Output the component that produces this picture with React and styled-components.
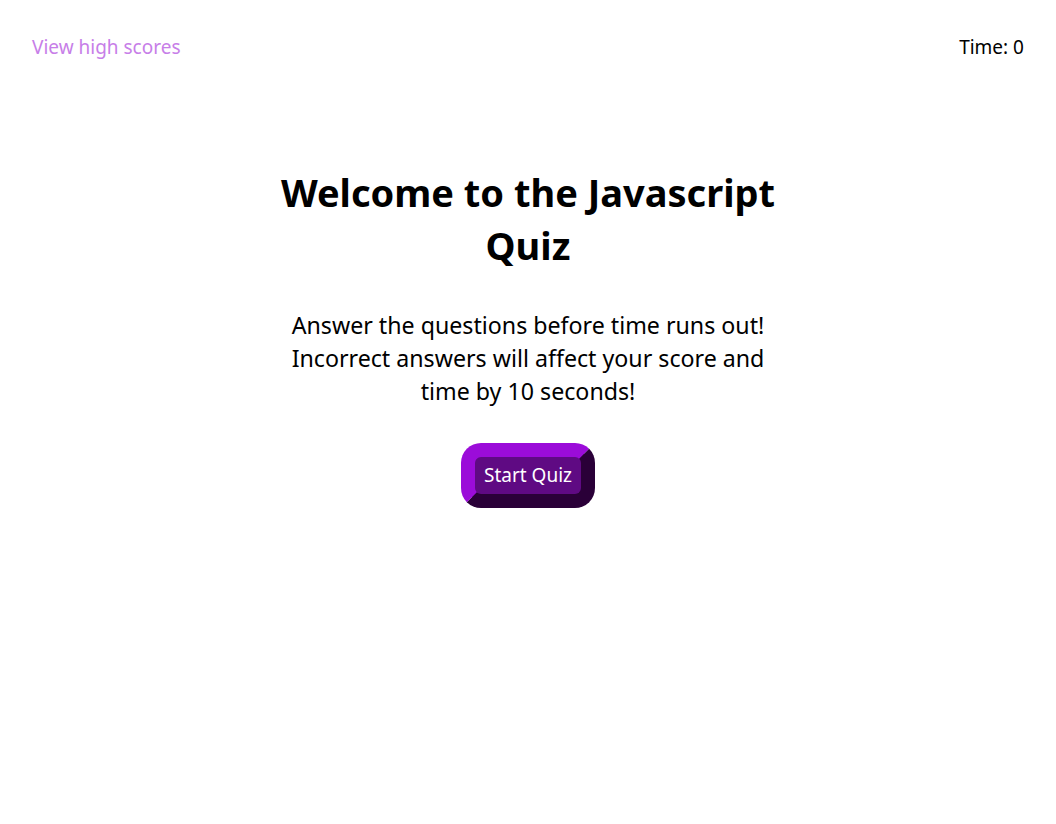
import React from "react";
import styled, { createGlobalStyle } from "styled-components";

const GlobalStyle = createGlobalStyle`
  body {
    margin: 0;
    background: #ffffff;
    font-family: "Segoe UI", "Noto Sans", "Open Sans", sans-serif;
    color: #000000;
  }
`;

const App = () => {
  return (
    <>
      <GlobalStyle />
      <Header>
        <HighScores href="#">View high scores</HighScores>
        <Timer>Time: 0</Timer>
      </Header>
      <Main>
        <Title>Welcome to the Javascript Quiz</Title>
        <Intro>
          Answer the questions before time runs out! Incorrect answers will
          affect your score and time by 10 seconds!
        </Intro>
        <StartButton>Start Quiz</StartButton>
      </Main>
    </>
  );
};

const Header = styled.header`
  display: flex;
  justify-content: space-between;
  align-items: center;
  padding: 34px 32px 0;
  font-size: 19px;
  line-height: 27px;
`;

const HighScores = styled.a`
  color: #c77ee8;
  text-decoration: none;
`;

const Timer = styled.div`
  color: #000000;
`;

const Main = styled.main`
  width: 500px;
  margin: 0 auto;
  display: flex;
  flex-direction: column;
  align-items: center;
  text-align: center;
`;

const Title = styled.h1`
  margin: 105px 0 0;
  font-size: 38px;
  line-height: 53px;
  font-weight: 700;
`;

const Intro = styled.p`
  margin: 37px 0 0;
  font-size: 23.2px;
  line-height: 33px;
`;

const StartButton = styled.button`
  margin-top: 35px;
  padding: 0 9px;
  height: 65px;
  border-width: 14px;
  border-style: solid;
  border-color: #9b0cd9 #2a0038 #2a0038 #9b0cd9;
  border-radius: 20px;
  background: #5f0a83;
  color: #ffffff;
  font-family: inherit;
  font-size: 19px;
  line-height: 27px;
  cursor: pointer;
`;

export default App;
